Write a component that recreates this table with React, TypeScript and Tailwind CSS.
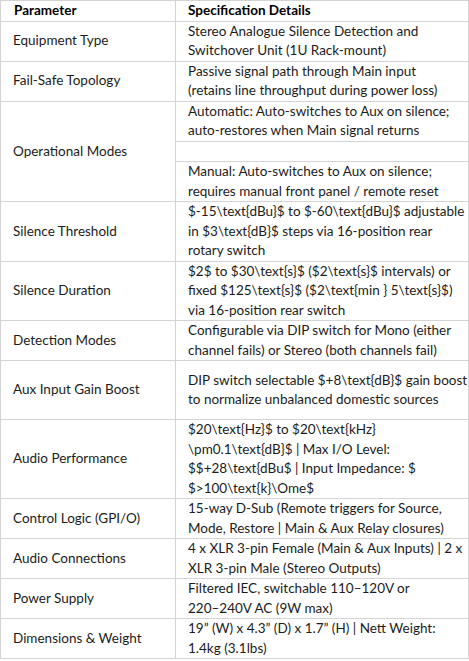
import React from 'react';

type Row = { param: string; lines: string[][]; h?: string };

// each inner array is one sub-cell in the right column, each string one line
const rows: Row[] = [
  { param: 'Equipment Type', lines: [['Stereo Analogue Silence Detection and', 'Switchover Unit (1U Rack-mount)']] },
  { param: 'Fail-Safe Topology', lines: [['Passive signal path through Main input', '(retains line throughput during power loss)']] },
  {
    param: 'Operational Modes',
    lines: [
      ['Automatic: Auto-switches to Aux on silence;', 'auto-restores when Main signal returns'],
      [''],
      ['Manual: Auto-switches to Aux on silence;', 'requires manual front panel / remote reset'],
    ],
  },
  {
    param: 'Silence Threshold',
    lines: [['$-15\\text{dBu}$ to $-60\\text{dBu}$ adjustable', 'in $3\\text{dB}$ steps via 16-position rear', 'rotary switch']],
  },
  {
    param: 'Silence Duration',
    lines: [['$2$ to $30\\text{s}$ ($2\\text{s}$ intervals) or', 'fixed $125\\text{s}$ ($2\\text{min } 5\\text{s}$)', 'via 16-position rear switch']],
  },
  { param: 'Detection Modes', lines: [['Configurable via DIP switch for Mono (either', 'channel fails) or Stereo (both channels fail)']] },
  {
    param: 'Aux Input Gain Boost',
    lines: [['DIP switch selectable $+8\\text{dB}$ gain boost', 'to normalize unbalanced domestic sources']],
    h: 'h-[59px]',
  },
  {
    param: 'Audio Performance',
    lines: [['$20\\text{Hz}$ to $20\\text{kHz}', '\\pm0.1\\text{dB}$ | Max I/O Level:', '$$+28\\text{dBu$ | Input Impedance: $', '$>100\\text{k}\\Ome$']],
  },
  { param: 'Control Logic (GPI/O)', lines: [['15-way D-Sub (Remote triggers for Source,', 'Mode, Restore | Main & Aux Relay closures)']] },
  { param: 'Audio Connections', lines: [['4 x XLR 3-pin Female (Main & Aux Inputs) | 2 x', 'XLR 3-pin Male (Stereo Outputs)']] },
  { param: 'Power Supply', lines: [['Filtered IEC, switchable 110\u2013120V or', '220\u2013240V AC (9W max)']] },
  { param: 'Dimensions & Weight', lines: [['19\u201d (W) x 4.3\u201d (D) x 1.7\u201d (H) | Nett Weight:', '1.4kg (3.1lbs)']] },
];

const cell = 'border border-[#d4d4d4] align-middle py-0 leading-[19.5px] whitespace-nowrap';

export default function App() {
  return (
    <div className="w-[469px] bg-white text-[13.5px] text-[#1c1c1c]" style={{ fontFamily: 'Lato, "Liberation Sans", sans-serif' }}>
      <table className="w-full border-collapse">
        <thead>
          <tr>
            <th className={`${cell} w-[175px] pl-[13px] text-left font-bold text-black`}>Parameter</th>
            <th className={`${cell} pl-[12px] text-left font-bold text-black`}>Specification Details</th>
          </tr>
        </thead>
        <tbody>
          {rows.map((r) =>
            r.lines.map((sub, si) => (
              <tr key={r.param + si} className={r.h}>
                {si === 0 && (
                  <td rowSpan={r.lines.length} className={`${cell} pl-[12px]`}>
                    {r.param}
                  </td>
                )}
                <td className={`${cell} pl-[12px]`}>
                  {sub.map((l, li) => (
                    <div key={li}>{l || '\u00a0'}</div>
                  ))}
                </td>
              </tr>
            ))
          )}
        </tbody>
      </table>
    </div>
  );
}
